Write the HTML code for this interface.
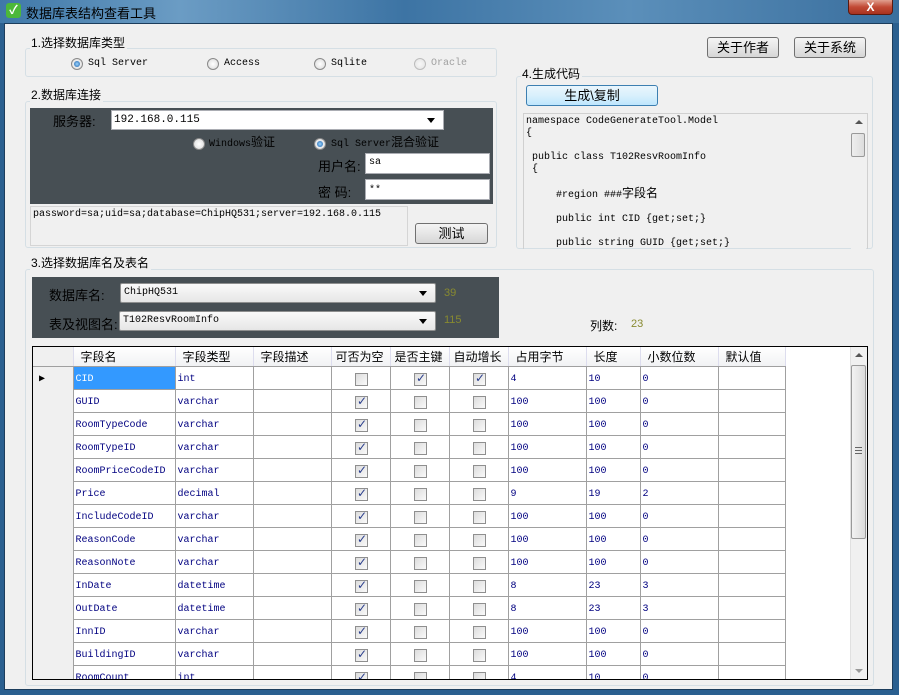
<!DOCTYPE html>
<html><head><meta charset="utf-8"><style>
*{box-sizing:border-box;margin:0;padding:0}
body{width:899px;height:695px;overflow:hidden;background:#2a5f8f;font-family:"Liberation Sans","Noto Sans CJK SC",sans-serif;font-size:12px;color:#000;position:relative}
.a{position:absolute}
.title{left:0;top:0;width:899px;height:23px;background:linear-gradient(90deg,#3f78a8,#6b9cc4 20%,#3d74a4 45%,#5b8fba 70%,#3a6f9e);}
.client{left:4px;top:23px;width:889px;height:667px;background:#f0f0f0;border:1px solid #1c3d5c}
.gb{position:absolute;border:1px solid #d5dfe5;border-radius:3px}
.gt{position:absolute;background:#f0f0f0;padding:0 2px 0 1px;font-size:12px;line-height:14px}
.mono{font-family:"Liberation Mono","Noto Sans CJK SC",monospace;font-size:10px;line-height:14px;white-space:nowrap}
.mono span{font-size:12px;line-height:14px}
.radio{position:absolute;width:12px;height:12px;border-radius:50%;border:1px solid #8a8a8a;background:radial-gradient(#fff,#d8d8d8)}
.radio.on::after{content:"";position:absolute;left:2px;top:2px;width:6px;height:6px;border-radius:50%;background:radial-gradient(#9ad4ff,#1a5fa8)}
.btn{position:absolute;border:1px solid #707070;border-radius:3px;background:linear-gradient(#f4f4f4,#e6e6e6 50%,#d6d6d6);text-align:center;font-size:13px}
.dark{position:absolute;background:#474f54}
.inp{position:absolute;background:#fff;border:1px solid #abadb3}
.combo{position:absolute;background:linear-gradient(#fafafa,#e6e6e6);border:1px solid #8e8f8f;border-radius:2px}
.combo::after,.inp.dd::after{content:"";position:absolute;right:8px;top:7px;border:4px solid transparent;border-top:5px solid #000}
table{border-collapse:collapse;table-layout:fixed}
td{border:1px solid #a0a0a0;height:23px;font-family:"Liberation Mono",monospace;font-size:10px;color:#000080;padding:3px 0 0 2px;white-space:nowrap;overflow:hidden}
th{height:19px;font-weight:normal;font-size:12px;text-align:left;padding-left:7px;background:linear-gradient(#fff,#f1f2f4);border-right:1px solid #dde;border-bottom:1px solid #a0a0a0;white-space:nowrap;overflow:hidden}
td.rh{background:#f0f0f0;border-left:none;border-top:none;border-bottom:none}
th.rh{background:#f0f0f0}
.cb{display:block;margin:0 auto;width:13px;height:13px;border:1px solid #8f8f8f;background:linear-gradient(135deg,#dcdcdc,#fafafa);position:relative}
.cb.on::after{content:"✓";position:absolute;left:1px;top:-3px;font-size:12px;color:#2a3e8c;font-weight:bold;font-family:"DejaVu Sans",sans-serif}
</style></head><body>
<div class="a title"></div>
<div class="a" style="left:6px;top:3px;width:15px;height:15px;border-radius:3px;background:#4cb83a;color:#fff;font-size:12px;line-height:15px;text-align:center;font-weight:bold">✓</div>
<div class="a" style="left:26px;top:3px;font-size:13px;color:#000;">数据库表结构查看工具</div>
<div class="a" style="left:848px;top:0;width:45px;height:15px;background:linear-gradient(#e0a090,#c24a35 50%,#a8321f);border:1px solid #5a1a10;border-top:none;border-radius:0 0 4px 4px;color:#fff;text-align:center;font-weight:bold;font-size:12px;line-height:14px">X</div>
<div class="a client"></div>

<!-- group 1 -->
<div class="gb" style="left:25px;top:48px;width:472px;height:29px"></div>
<div class="gt" style="left:30px;top:36px">1.选择数据库类型</div>
<div class="radio on" style="left:71px;top:58px"></div><div class="a mono" style="left:88px;top:57px">Sql Server</div>
<div class="radio" style="left:207px;top:58px"></div><div class="a mono" style="left:224px;top:57px">Access</div>
<div class="radio" style="left:314px;top:58px"></div><div class="a mono" style="left:331px;top:57px">Sqlite</div>
<div class="radio" style="left:414px;top:58px;opacity:.5"></div><div class="a mono" style="left:431px;top:57px;color:#a0a0a0">Oracle</div>

<div class="btn" style="left:707px;top:37px;width:72px;height:21px;line-height:19px">关于作者</div>
<div class="btn" style="left:794px;top:37px;width:72px;height:21px;line-height:19px">关于系统</div>

<!-- group 2 -->
<div class="gb" style="left:25px;top:101px;width:472px;height:147px"></div>
<div class="gt" style="left:30px;top:88px">2.数据库连接</div>
<div class="dark" style="left:30px;top:108px;width:463px;height:96px"></div>
<div class="a" style="left:53px;top:111px;font-size:13px">服务器:</div>
<div class="inp dd" style="left:111px;top:110px;width:333px;height:20px"></div>
<div class="a mono" style="left:114px;top:113px;font-size:11px">192.168.0.115</div>
<div class="radio" style="left:193px;top:138px"></div><div class="a mono" style="left:209px;top:136px;color:#000">Windows<span>验证</span></div>
<div class="radio on" style="left:314px;top:138px"></div><div class="a mono" style="left:331px;top:136px">Sql Server<span>混合验证</span></div>
<div class="a" style="left:318px;top:156px;font-size:13px">用户名:</div>
<div class="inp" style="left:365px;top:153px;width:125px;height:21px"></div><div class="a mono" style="left:369px;top:156px">sa</div>
<div class="a" style="left:318px;top:182px;font-size:13px">密 码:</div>
<div class="inp" style="left:365px;top:179px;width:125px;height:21px"></div><div class="a mono" style="left:369px;top:184px">**</div>
<div class="a" style="left:30px;top:206px;width:378px;height:40px;border:1px solid #d5d5d5"></div>
<div class="a mono" style="left:33px;top:208px">password=sa;uid=sa;database=ChipHQ531;server=192.168.0.115</div>
<div class="btn" style="left:415px;top:223px;width:73px;height:21px;line-height:19px">测试</div>

<!-- group 4 -->
<div class="gb" style="left:516px;top:76px;width:357px;height:173px"></div>
<div class="gt" style="left:521px;top:67px">4.生成代码</div>
<div class="btn" style="left:526px;top:85px;width:132px;height:21px;line-height:19px;border-color:#3c7fb1;background:linear-gradient(#eaf6fd,#d9f0fc 50%,#bee6fd)">生成\复制</div>
<div class="a" style="left:523px;top:113px;width:345px;height:136px;border:1px solid #d0d0d0;border-bottom:none"></div>
<div class="a mono" style="left:526px;top:116px;line-height:12px;white-space:pre">namespace CodeGenerateTool.Model
{

 public class T102ResvRoomInfo
 {

     #region ###<span style="font-size:12px;line-height:12px">字段名</span>

     public int CID {get;set;}

     public string GUID {get;set;}</div>
<div class="a" style="left:851px;top:114px;width:15px;height:135px;background:#f0f0f0"></div>
<div class="a" style="left:855px;top:120px;border:4px solid transparent;border-bottom:4px solid #555;border-top:none"></div>
<div class="a" style="left:851px;top:133px;width:14px;height:24px;border:1px solid #999;border-radius:2px;background:linear-gradient(90deg,#eee,#ddd)"></div>

<!-- group 3 -->
<div class="gb" style="left:25px;top:269px;width:849px;height:417px"></div>
<div class="gt" style="left:30px;top:256px">3.选择数据库名及表名</div>
<div class="dark" style="left:32px;top:277px;width:467px;height:61px"></div>
<div class="a" style="left:49px;top:285px;font-size:13px">数据库名:</div>
<div class="combo" style="left:120px;top:283px;width:316px;height:20px"></div><div class="a mono" style="left:124px;top:286px">ChipHQ531</div>
<div class="a" style="left:444px;top:287px;color:#888a30;font-size:11px">39</div>
<div class="a" style="left:49px;top:314px;font-size:13px">表及视图名:</div>
<div class="combo" style="left:119px;top:311px;width:317px;height:20px"></div><div class="a mono" style="left:123px;top:314px">T102ResvRoomInfo</div>
<div class="a" style="left:444px;top:314px;color:#888a30;font-size:11px">115</div>
<div class="a" style="left:590px;top:317px;font-size:12px">列数:</div>
<div class="a" style="left:631px;top:318px;color:#888a30;font-size:11px">23</div>

<div class="a" style="left:32px;top:346px;width:836px;height:334px;border:1px solid #000;background:#fff;overflow:hidden">
<table style="width:752px">
<colgroup><col style="width:40px"><col style="width:102px"><col style="width:78px"><col style="width:78px"><col style="width:59px"><col style="width:59px"><col style="width:59px"><col style="width:78px"><col style="width:54px"><col style="width:78px"><col style="width:67px"></colgroup>
<tr><th class="rh"></th><th>字段名</th><th>字段类型</th><th>字段描述</th><th style="padding-left:4px">可否为空</th><th style="padding-left:4px">是否主键</th><th style="padding-left:4px">自动增长</th><th>占用字节</th><th>长度</th><th>小数位数</th><th>默认值</th></tr>
<tr><td class="rh" style="font-size:10px;color:#000;padding-left:6px">▶</td><td style="background:#3399ff;color:#fff">CID</td><td>int</td><td></td><td><i class="cb"></i></td><td><i class="cb on"></i></td><td><i class="cb on"></i></td><td>4</td><td>10</td><td>0</td><td></td></tr>
<tr><td class="rh"></td><td>GUID</td><td>varchar</td><td></td><td><i class="cb on"></i></td><td><i class="cb"></i></td><td><i class="cb"></i></td><td>100</td><td>100</td><td>0</td><td></td></tr>
<tr><td class="rh"></td><td>RoomTypeCode</td><td>varchar</td><td></td><td><i class="cb on"></i></td><td><i class="cb"></i></td><td><i class="cb"></i></td><td>100</td><td>100</td><td>0</td><td></td></tr>
<tr><td class="rh"></td><td>RoomTypeID</td><td>varchar</td><td></td><td><i class="cb on"></i></td><td><i class="cb"></i></td><td><i class="cb"></i></td><td>100</td><td>100</td><td>0</td><td></td></tr>
<tr><td class="rh"></td><td>RoomPriceCodeID</td><td>varchar</td><td></td><td><i class="cb on"></i></td><td><i class="cb"></i></td><td><i class="cb"></i></td><td>100</td><td>100</td><td>0</td><td></td></tr>
<tr><td class="rh"></td><td>Price</td><td>decimal</td><td></td><td><i class="cb on"></i></td><td><i class="cb"></i></td><td><i class="cb"></i></td><td>9</td><td>19</td><td>2</td><td></td></tr>
<tr><td class="rh"></td><td>IncludeCodeID</td><td>varchar</td><td></td><td><i class="cb on"></i></td><td><i class="cb"></i></td><td><i class="cb"></i></td><td>100</td><td>100</td><td>0</td><td></td></tr>
<tr><td class="rh"></td><td>ReasonCode</td><td>varchar</td><td></td><td><i class="cb on"></i></td><td><i class="cb"></i></td><td><i class="cb"></i></td><td>100</td><td>100</td><td>0</td><td></td></tr>
<tr><td class="rh"></td><td>ReasonNote</td><td>varchar</td><td></td><td><i class="cb on"></i></td><td><i class="cb"></i></td><td><i class="cb"></i></td><td>100</td><td>100</td><td>0</td><td></td></tr>
<tr><td class="rh"></td><td>InDate</td><td>datetime</td><td></td><td><i class="cb on"></i></td><td><i class="cb"></i></td><td><i class="cb"></i></td><td>8</td><td>23</td><td>3</td><td></td></tr>
<tr><td class="rh"></td><td>OutDate</td><td>datetime</td><td></td><td><i class="cb on"></i></td><td><i class="cb"></i></td><td><i class="cb"></i></td><td>8</td><td>23</td><td>3</td><td></td></tr>
<tr><td class="rh"></td><td>InnID</td><td>varchar</td><td></td><td><i class="cb on"></i></td><td><i class="cb"></i></td><td><i class="cb"></i></td><td>100</td><td>100</td><td>0</td><td></td></tr>
<tr><td class="rh"></td><td>BuildingID</td><td>varchar</td><td></td><td><i class="cb on"></i></td><td><i class="cb"></i></td><td><i class="cb"></i></td><td>100</td><td>100</td><td>0</td><td></td></tr>
<tr><td class="rh"></td><td>RoomCount</td><td>int</td><td></td><td><i class="cb on"></i></td><td><i class="cb"></i></td><td><i class="cb"></i></td><td>4</td><td>10</td><td>0</td><td></td></tr>
</table>
<div class="a" style="left:817px;top:0;width:17px;height:332px;background:#f0f0f0;border-left:1px solid #e0e0e0"></div>
<div class="a" style="left:822px;top:6px;border:4px solid transparent;border-bottom:4px solid #555;border-top:none"></div>
<div class="a" style="left:822px;top:322px;border:4px solid transparent;border-top:4px solid #999;border-bottom:none"></div>
<div class="a" style="left:818px;top:18px;width:15px;height:174px;border:1px solid #999;border-radius:2px;background:linear-gradient(90deg,#f2f2f2,#dcdcdc)"></div>
<div class="a" style="left:822px;top:100px;width:7px;height:7px;border-top:1px solid #666;border-bottom:1px solid #666"><div style="margin-top:2px;border-top:1px solid #666"></div></div>
</div>
</body></html>
